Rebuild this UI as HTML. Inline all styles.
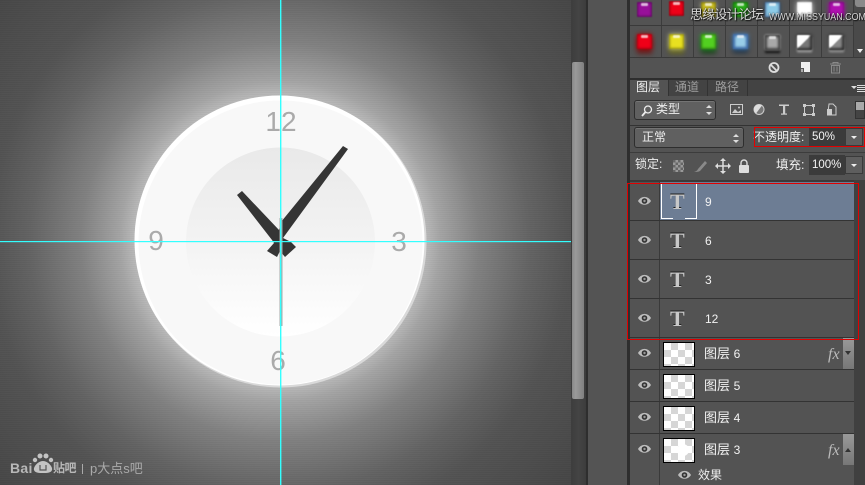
<!DOCTYPE html>
<html><head><meta charset="utf-8"><style>
html,body{margin:0;padding:0;width:865px;height:485px;overflow:hidden;background:#535353}
body{position:relative;font-family:"Liberation Sans","Noto Sans CJK SC",sans-serif;color:#e8e8e8}
div{position:absolute;box-sizing:border-box}
.t{white-space:nowrap;line-height:1}
.sw{width:15px;height:15px;border-radius:1px;box-shadow:inset 0 0 2px 1px rgba(0,0,0,.4);filter:blur(.5px)}
.sw:after{content:"";position:absolute;left:4px;top:1px;width:7px;height:3px;background:rgba(255,255,255,.7);border-radius:1px}
.h{left:630px;width:235px;height:1px;background:#333}
.v{top:0;height:57px;width:1px;background:#3c3c3c}
.row{left:630px;width:224px;height:1px;background:#333}
.th{left:663px;width:32px;height:25px;border:1px solid #000;background-color:#fff;background-image:conic-gradient(#d6d6d6 25%,#fff 0 50%,#d6d6d6 0 75%,#fff 0);background-size:14px 14px}
.tt{font:bold 22px "Liberation Serif",serif;color:#c8c8c8;left:670px;text-shadow:0 -1px 0 #1a1a1a}
.ln{font-size:13px;color:#f2f2f2}
.box{background:#606060;border:1px solid #2e2e2e;border-radius:3px;box-shadow:inset 0 1px 0 #747474}
</style></head><body>

<!-- canvas -->
<div style="left:0;top:0;width:571px;height:485px;overflow:hidden;background:radial-gradient(circle at 280px 241px,#b8b8b8 146px,#a4a4a4 160px,#808080 200px,#636363 250px,#535353 290px,#474747 370px,#404040 430px)">
<div style="left:0;top:0;width:571px;height:485px;background:repeating-linear-gradient(0deg,rgba(0,0,0,.02) 0 1px,rgba(255,255,255,.012) 1px 2px)"></div>
<svg width="571" height="485" style="position:absolute;left:0;top:0">
<defs><linearGradient id="g" x1="0" y1="0" x2="0" y2="1"><stop offset="0" stop-color="#e9e9e9"/><stop offset=".45" stop-color="#f2f2f2"/><stop offset="1" stop-color="#fff"/></linearGradient></defs>
<circle cx="281" cy="242" r="145.500" fill="#d9d9d9"/>
<circle cx="279.500" cy="240.500" r="145" fill="#fff"/>
<circle cx="280.500" cy="242.500" r="142" fill="#f8f8f8"/>
<circle cx="280.500" cy="242" r="94.500" fill="url(#g)"/>
<text x="281" y="131" text-anchor="middle" font-family="Liberation Sans" font-size="28" fill="#aaa">12</text>
<text x="156" y="250" text-anchor="middle" font-family="Liberation Sans" font-size="28" fill="#aaa">9</text>
<text x="399" y="251" text-anchor="middle" font-family="Liberation Sans" font-size="28" fill="#aaa">3</text>
<text x="278" y="370" text-anchor="middle" font-family="Liberation Sans" font-size="28" fill="#aaa">6</text>
<polygon points="343,146 348,149 283,238 291,242 296,247 285,257 280,251 277,257 267,251 274,243 272,240 237,195 242,191 279,230 281,222" fill="#353535"/>
<rect x="279.500" y="218" width="3" height="108" fill="#a9a9a9"/>
<rect x="280.500" y="240" width="1" height="86" fill="#c98f84"/>
<rect x="280" y="0" width="1.400" height="485" fill="#3ff"/>
<rect x="0" y="241" width="571" height="1.200" fill="#3ff"/>
</svg>
<!-- watermark -->
<svg width="160" height="45" style="position:absolute;left:0;top:440px" fill="#c4c4c4">
<circle cx="35" cy="20" r="2.200"/><circle cx="40" cy="16" r="2.500"/><circle cx="46" cy="16" r="2.500"/><circle cx="51" cy="20" r="2.200"/>
<path d="M34 30c-1-3 4-9 9-9s10 6 9 9-5 3-9 3-8 0-9-3z"/>
<path d="M40 25v5h6v-5" fill="none" stroke="#555" stroke-width="1.200"/>
</svg>
<div class="t" style="left:10px;top:461px;font-size:14px;font-weight:bold;color:#b8b8b8;letter-spacing:.3px">Bai</div>
<div class="t" style="left:53px;top:462px;font-size:12px;font-weight:bold;color:#b8b8b8;letter-spacing:-.5px">贴吧</div>
<div style="left:82px;top:464px;width:1px;height:10px;background:#aaa"></div>
<div class="t" style="left:90px;top:462px;font-size:13px;color:#aaa">p大点s吧</div>
</div>

<!-- scrollbar -->
<div style="left:571px;top:0;width:15px;height:485px;background:linear-gradient(90deg,#3d3d3d,#444 50%,#3c3c3c)"></div>
<div style="left:572px;top:62px;width:12px;height:337px;background:linear-gradient(90deg,#888,#9a9a9a 30%,#808080);border-radius:2px"></div>
<div style="left:586px;top:0;width:2px;height:485px;background:#2e2e2e"></div>
<div style="left:588px;top:0;width:39px;height:485px;background:#545454"></div>
<div style="left:627px;top:0;width:3px;height:485px;background:#2e2e2e"></div>

<!-- styles panel -->
<div style="left:630px;top:0;width:235px;height:78px;background:#535353"></div>
<div class="v" style="left:661px"></div><div class="v" style="left:693px"></div><div class="v" style="left:725px"></div><div class="v" style="left:757px"></div><div class="v" style="left:789px"></div><div class="v" style="left:821px"></div><div class="v" style="left:853px"></div>
<div class="h" style="top:25px;width:223px;background:#3a3a3a"></div>
<div class="h" style="top:57px;background:#3a3a3a"></div>
<div style="left:854px;top:0;width:11px;height:57px;background:#4a4a4a"></div>
<div style="left:855px;top:0;width:10px;height:7px;background:#8a8a8a;border-radius:0 0 0 3px"></div>
<div style="left:857px;top:49px;width:0;height:0;border:3px solid transparent;border-top:4px solid #eee"></div>

<div class="sw" style="left:637px;top:2px;background:#98109a"></div>
<div class="sw" style="left:669px;top:1px;background:#ee0018"></div>
<div class="sw" style="left:701px;top:2px;background:#c8bc20;box-shadow:inset 0 0 2px 1px rgba(0,0,0,.4),0 0 4px #aa8"></div>
<div class="sw" style="left:733px;top:2px;background:#28b018;box-shadow:inset 0 0 2px 1px rgba(0,0,0,.4),0 0 4px #282"></div>
<div class="sw" style="left:765px;top:2px;background:#8ccbe8;box-shadow:inset 0 0 2px 1px rgba(0,0,60,.5),0 0 3px #246"></div>
<div class="sw" style="left:797px;top:2px;background:#fff;box-shadow:inset 0 0 2px #ccc,0 0 6px #ddd"></div>
<div class="sw" style="left:829px;top:2px;background:#b010b0;box-shadow:inset 0 0 2px 1px rgba(0,0,0,.3),0 0 5px #a0a"></div>
<div class="sw" style="left:637px;top:34px;background:#f00018;box-shadow:inset 0 0 2px 1px rgba(0,0,0,.3),0 0 5px #a00,0 5px 5px #622"></div>
<div class="sw" style="left:669px;top:34px;background:#e8e020;box-shadow:inset 0 0 2px 1px rgba(0,0,0,.4),0 0 5px #cc8,0 5px 5px #662"></div>
<div class="sw" style="left:701px;top:34px;background:#52d020;box-shadow:inset 0 0 2px 1px rgba(0,0,0,.4),0 0 5px #2a2,0 5px 5px #242"></div>
<div class="sw" style="left:733px;top:34px;background:#98cde8;box-shadow:inset 0 0 2px 2px rgba(0,40,120,.6),0 0 4px #48c,0 4px 5px #234"></div>
<div class="sw" style="left:765px;top:35px;background:#a8a8a8;box-shadow:inset 0 0 2px 2px #444,0 0 2px #ccc,0 3px 2px #111"></div>
<div class="sw" style="left:797px;top:35px;background:linear-gradient(135deg,#fff 45%,#777 50%);box-shadow:inset -2px -2px 2px #333,0 0 3px #222,0 2px 2px #ccc"></div>
<div class="sw" style="left:829px;top:35px;background:linear-gradient(135deg,#fff 45%,#888 50%);box-shadow:inset -2px -2px 2px #333,0 0 3px #222,0 2px 2px #bbb"></div>

<div class="t" style="left:690px;top:8px;font-size:13px;letter-spacing:-.8px;color:#d8d8d8;text-shadow:0 0 2px #111,1px 1px 1px #111">思缘设计论坛</div>
<div class="t" style="left:769px;top:13px;font-size:10px;color:#d8d8d8;text-shadow:0 0 2px #111,1px 1px 1px #111;transform:scaleX(.89);transform-origin:0 0">WWW.MISSYUAN.COM</div>

<svg width="100" height="16" style="position:absolute;left:765px;top:60px" fill="none">
<circle cx="9" cy="7.500" r="4.500" stroke="#ddd" stroke-width="1.800"/><path d="M6 5l6 6" stroke="#ddd" stroke-width="1.800"/>
<path d="M36 2h9v10h-6v-4h-3z" fill="#eee"/><path d="M36 9h2v3h-2z" fill="#aaa"/>
<path d="M65 4h11M68 4V2.500h5V4M66.500 5.500h8V13h-8zM69 6.500v5M72 6.500v5" stroke="#8a8a8a"/>
</svg>
<div style="left:630px;top:78px;width:235px;height:2px;background:#2e2e2e"></div>

<!-- tabs -->
<div style="left:630px;top:80px;width:235px;height:16px;background:#434343"></div>
<div style="left:630px;top:80px;width:38px;height:17px;background:#535353"></div>
<div style="left:668px;top:80px;width:1px;height:16px;background:#333"></div>
<div style="left:707px;top:80px;width:1px;height:16px;background:#333"></div>
<div style="left:747px;top:80px;width:1px;height:16px;background:#333"></div>
<div class="t" style="left:636px;top:81px;font-size:12px;color:#f0f0f0">图层</div>
<div class="t" style="left:675px;top:81px;font-size:12px;color:#9c9c9c">通道</div>
<div class="t" style="left:715px;top:81px;font-size:12px;color:#9c9c9c">路径</div>
<div style="left:851px;top:86px;width:0;height:0;border:3px solid transparent;border-top:3px solid #ddd"></div>
<div style="left:857px;top:85px;width:8px;height:7px;background:repeating-linear-gradient(0deg,#ddd 0 1px,transparent 1px 2px)"></div>

<!-- filter row -->
<div style="left:630px;top:97px;width:235px;height:28px;background:#535353"></div>
<div class="box" style="left:634px;top:100px;width:82px;height:20px"></div>
<svg width="14" height="14" style="position:absolute;left:640px;top:104px" fill="none" stroke="#eee" stroke-width="1.300"><circle cx="8" cy="5.500" r="3.500"/><path d="M5.500 8L2 12" stroke-width="1.800"/></svg>
<div class="t" style="left:656px;top:103px;font-size:12px;color:#eee">类型</div>
<div style="left:706px;top:105px;border:3px solid transparent;border-bottom:3px solid #ddd;border-top:0"></div>
<div style="left:706px;top:112px;border:3px solid transparent;border-top:3px solid #ddd;border-bottom:0"></div>
<svg width="115" height="20" style="position:absolute;left:728px;top:100px" fill="none">
<rect x="2.500" y="4.500" width="12" height="10" stroke="#ccc"/><path d="M4 13l3-4 3 3 3-2v3z" fill="#ccc"/><circle cx="11" cy="7.500" r="1" fill="#ccc"/>
<circle cx="31" cy="9.500" r="5" fill="#777" stroke="#ccc"/><path d="M34 5.500a5 5 0 0 1-6 8z" fill="#ddd" transform="rotate(180 31 9.500)"/>
<rect x="51" y="4.500" width="10" height="1.500" fill="#ccc"/><rect x="55" y="4.500" width="2.200" height="10" fill="#ccc"/><rect x="53" y="13.500" width="6" height="1.200" fill="#ccc"/>
<rect x="76.500" y="5.500" width="9" height="9" stroke="#ccc"/><path d="M75 4h3v3h-3zM84 4h3v3h-3zM75 13h3v3h-3zM84 13h3v3h-3z" fill="#ccc"/>
<path d="M101 4h4l3 3v8h-8v-3z" stroke="#ccc"/><rect x="99" y="9" width="5" height="6.500" fill="#ccc"/>
</svg>
<div style="left:855px;top:101px;width:10px;height:18px;background:linear-gradient(#aaa 50%,#444 50%);border:1px solid #333"></div>
<div style="left:630px;top:125px;width:235px;height:1px;background:#333"></div>

<!-- blend row -->
<div class="box" style="left:634px;top:127px;width:110px;height:21px"></div>
<div class="t" style="left:642px;top:131px;font-size:12px;color:#eee">正常</div>
<div style="left:733px;top:134px;border:3px solid transparent;border-bottom:3px solid #ddd;border-top:0"></div>
<div style="left:733px;top:140px;border:3px solid transparent;border-bottom:0;border-top:3px solid #ddd"></div>
<div class="t" style="left:753px;top:131px;font-size:12px;color:#eee">不透明度:</div>
<div style="left:809px;top:128px;width:36px;height:18px;background:#3b3b3b"></div>
<div class="t" style="left:812px;top:132px;font-size:11.500px;color:#f4f4f4">50%</div>
<div style="left:845px;top:128px;width:18px;height:18px;background:#5e5e5e;border:1px solid #3a3a3a"></div>
<div style="left:851px;top:136px;border:3px solid transparent;border-top:3px solid #eee;border-bottom:0"></div>
<div style="left:754px;top:127px;width:111px;height:20px;border:1px solid #e40000"></div>
<div style="left:630px;top:152px;width:235px;height:1px;background:#3c3c3c"></div>

<!-- lock row -->
<div class="t" style="left:635px;top:158px;font-size:12px;color:#eee">锁定:</div>
<div style="left:673px;top:160px;width:11px;height:12px;background-color:#777;background-image:conic-gradient(#999 25%,#666 0 50%,#999 0 75%,#666 0);background-size:5px 5px"></div>
<svg width="85" height="18" style="position:absolute;left:692px;top:157px" fill="none">
<path d="M1 15c2 0 4-1 5-3l7-8 2 2-7 8c-2 1-4 1-7 1z" fill="#8a8a8a"/>
<path d="M31 3v12M25 9h12" stroke="#ddd" stroke-width="1.500"/><path d="M31 1l3 3h-6zM31 17l3-3h-6zM23 9l3-3v6zM39 9l-3-3v6z" fill="#ddd"/>
<rect x="47" y="8" width="10" height="8" rx="1" fill="#ddd"/><path d="M49 8V6a3 3 0 0 1 6 0v2" stroke="#ddd" stroke-width="1.400"/>
</svg>
<div class="t" style="left:776px;top:159px;font-size:12.500px;color:#eee">填充:</div>
<div style="left:809px;top:155px;width:36px;height:20px;background:#3b3b3b"></div>
<div class="t" style="left:812px;top:160px;font-size:11.500px;color:#f4f4f4">100%</div>
<div style="left:845px;top:156px;width:18px;height:18px;background:#5e5e5e;border:1px solid #3a3a3a"></div>
<div style="left:851px;top:164px;border:3px solid transparent;border-top:3px solid #eee;border-bottom:0"></div>

<!-- layers list -->
<div style="left:630px;top:180px;width:235px;height:2px;background:#3a3a3a"></div>
<div style="left:630px;top:182px;width:224px;height:303px;background:#535353"></div>
<div style="left:660px;top:182px;width:194px;height:38px;background:#6d7d94"></div>
<div style="left:659px;top:182px;width:1px;height:303px;background:#3a3a3a"></div>
<div style="left:854px;top:180px;width:11px;height:305px;background:#404040"></div>
<div class="row" style="top:220px"></div><div class="row" style="top:259px"></div><div class="row" style="top:298px"></div><div class="row" style="top:337px"></div><div class="row" style="top:369px"></div><div class="row" style="top:401px"></div><div class="row" style="top:433px"></div>

<svg width="0" height="0" style="position:absolute"><defs><g id="e"><path d="M0 5c3-5.500 10-5.500 13 0-3 5-10 5-13 0z" fill="#bdbdbd"/><circle cx="6.500" cy="5" r="2.800" fill="#333"/><circle cx="6.500" cy="5" r="1.200" fill="#999"/></g></defs></svg>
<svg width="20" height="300" style="position:absolute;left:638px;top:190px"><use href="#e" y="6"/><use href="#e" y="45"/><use href="#e" y="84"/><use href="#e" y="123"/><use href="#e" y="158"/><use href="#e" y="190"/><use href="#e" y="222"/><use href="#e" y="254"/></svg>
<svg width="16" height="12" style="position:absolute;left:678px;top:470px"><use href="#e"/></svg>

<!-- selection brackets -->
<div style="left:661px;top:184px;width:1px;height:35px;background:#fff"></div>
<div style="left:661px;top:218px;width:12px;height:1px;background:#fff"></div>
<div style="left:696px;top:184px;width:1px;height:35px;background:#fff"></div>
<div style="left:685px;top:218px;width:12px;height:1px;background:#fff"></div>

<div class="t tt" style="top:189px">T</div><div class="t tt" style="top:228px">T</div><div class="t tt" style="top:267px">T</div><div class="t tt" style="top:306px">T</div>
<div class="t" style="left:705px;top:196px;font-size:12px;color:#f2f2f2">9</div>
<div class="t" style="left:705px;top:235px;font-size:12px;color:#f2f2f2">6</div>
<div class="t" style="left:705px;top:274px;font-size:12px;color:#f2f2f2">3</div>
<div class="t" style="left:705px;top:313px;font-size:12px;color:#f2f2f2">12</div>

<div class="th" style="top:342px"></div><div class="th" style="top:374px"></div><div class="th" style="top:406px"></div><div class="th" style="top:438px"></div>
<div style="left:677px;top:444px;width:12px;height:12px;background:#fff;border-radius:50%"></div>
<div class="t ln" style="left:704px;top:347px">图层 <span style="font-size:12px">6</span></div>
<div class="t ln" style="left:704px;top:379px">图层 <span style="font-size:12px">5</span></div>
<div class="t ln" style="left:704px;top:411px">图层 <span style="font-size:12px">4</span></div>
<div class="t ln" style="left:704px;top:443px">图层 <span style="font-size:12px">3</span></div>
<div class="t" style="left:698px;top:469px;font-size:12px;color:#eee">效果</div>
<div class="t" style="left:828px;top:346px;font:italic 16px 'Liberation Serif',serif;color:#bbb">fx</div>
<div class="t" style="left:828px;top:442px;font:italic 16px 'Liberation Serif',serif;color:#bbb">fx</div>
<div style="left:843px;top:338px;width:11px;height:31px;background:linear-gradient(#999,#777)"></div>
<div style="left:845px;top:351px;border:3px solid transparent;border-top:4px solid #333;border-bottom:0"></div>
<div style="left:843px;top:434px;width:11px;height:31px;background:linear-gradient(#999,#777)"></div>
<div style="left:845px;top:448px;border:3px solid transparent;border-bottom:4px solid #333;border-top:0"></div>

<!-- red box -->
<div style="left:627px;top:183px;width:232px;height:157px;border:1px solid #e00000"></div>
</body></html>
